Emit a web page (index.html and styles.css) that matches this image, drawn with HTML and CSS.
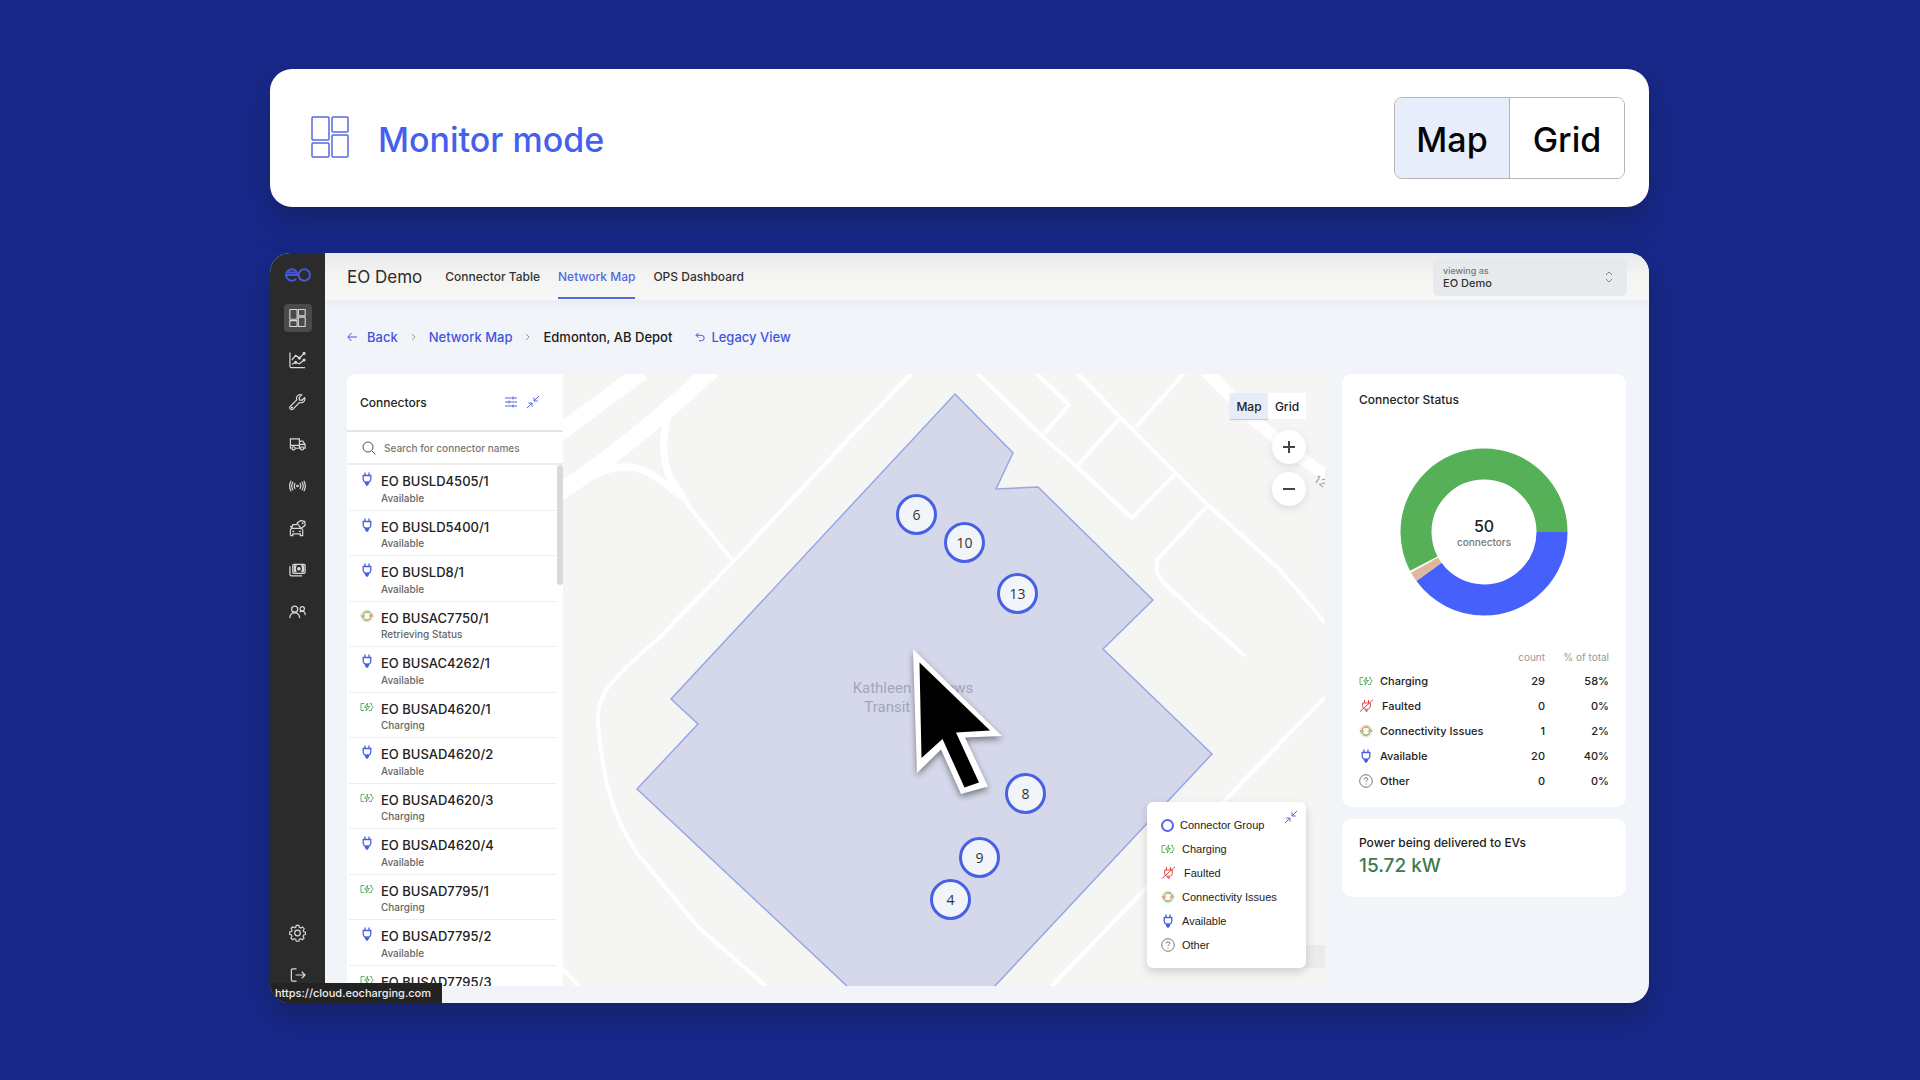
FILE: index.html
```
<!DOCTYPE html>
<html lang="en">
  <head>
    <meta charset="UTF-8" />
    <meta name="viewport" content="width=device-width, initial-scale=1.0" />
    <title>EO Cloud - Network Map</title>
    <link rel="stylesheet" href="styles.css">
  </head>
  <body>
    <!-- icon sprite -->
    <svg class="sprite" aria-hidden="true">
      <symbol id="i-dashboard" viewBox="0 0 38 42">
        <rect x="1" y="1" width="17" height="23" rx="1" /><rect x="21" y="1" width="16" height="15" rx="1" />
        <rect x="1" y="27" width="17" height="14" rx="1" /><rect x="21" y="19" width="16" height="22" rx="1" />
      </symbol>
      <symbol id="i-chart" viewBox="0 0 18 18">
        <path d="M1 1v14.500q0 1.500 1.500 1.500H17M3 9l4-5 4 3 5-5M3 13.500l4-2 4 1.500 5-4" />
        <circle cx="16" cy="2" r="1" /><circle cx="11" cy="7" r="1" /><circle cx="16" cy="9" r="1" /><circle cx="7" cy="11.500" r="1" />
      </symbol>
      <symbol id="i-wrench" viewBox="0 0 18 18">
        <path d="M16.500 4.500 13.500 7.200 11 6.800 10.700 4.400 13.400 1.400C11 .6 8.500 1.800 8 4.200c-.2 1-.1 1.700.2 2.500L1.500 13.400c-.9 1-.8 2.200 0 3 .9.8 2 .8 3-.1l6.600-6.800c2.400.9 5-.4 5.600-2.700.2-.8.1-1.600-.2-2.300z" />
        <circle cx="3.200" cy="14.800" r=".5" />
      </symbol>
      <symbol id="i-truck" viewBox="0 0 18 18">
        <path d="M2.800 13.500H1.500v-10h9.500v10H6.800M11 6h3.500L17 9.500v4h-1.200M12 13.500h-1M1.500 10.500H11M11 9.500h6" />
        <circle cx="4.800" cy="13.600" r="1.700" /><circle cx="13.800" cy="13.600" r="1.700" />
      </symbol>
      <symbol id="i-signal" viewBox="0 0 18 18">
        <circle cx="9" cy="9" r=".8" />
        <path d="M6.500 6q-1.800 3 0 6M11.500 6q1.800 3 0 6M4.400 4.500q-3 4.500 0 9M13.600 4.500q3 4.500 0 9M2.300 3.500q-3.300 5.500 0 11M15.700 3.500q3.300 5.500 0 11" />
      </symbol>
      <symbol id="i-cartag" viewBox="0 0 18 18">
        <path d="M8.500 5.500H4L2.600 9.500H13.500M1.500 17v-6l1.100-1.500M13.500 9.500l1 1.500v6h-2.500V15.200H4V17H1.500M1 7.500h2M3.500 12.500h2M10.500 12.500h2M8.500 3.800 12.500 1l4.200 1.200.3 4L12.800 9.500z" />
        <circle cx="14.500" cy="4" r=".4" />
      </symbol>
      <symbol id="i-cash" viewBox="0 0 18 18">
        <rect x="4" y="3" width="13" height="9.500" rx="1" /><path d="M1 5v8.500q0 1.700 1.700 1.700H14" />
        <path d="M5 4h3.500Q6 7.700 8.500 11.500H5zM16 4h-3.500Q15 7.700 12.500 11.500H16z" fill="currentColor" stroke="none" />
        <circle cx="10.500" cy="7.700" r="1.300" fill="currentColor" />
      </symbol>
      <symbol id="i-users" viewBox="0 0 18 18">
        <circle cx="6" cy="6" r="3.200" /><path d="M.8 15.500q.4-5.500 5.200-5.800 4.800.3 5.400 5.800" />
        <circle cx="14" cy="5.500" r="2.300" /><path d="M11.300 9q1-1 2.700-1 3 .3 3.300 4.300" />
      </symbol>
      <symbol id="i-gear" viewBox="0 0 18 18">
        <path d="M7.500 1h3l.5 2.200 1.500.7 2-1.200 1.900 2-1.200 2 .6 1.400 2.100.4v2.700l-2.200.5-.6 1.500 1.200 2-2 1.900-2-1.200-1.400.6-.4 2.200H7.500L7 16.500l-1.500-.7-2 1.200-1.900-2 1.200-1.900-.6-1.500L.2 11V8.300l2.100-.5.6-1.400-1.200-2 2-1.900 1.900 1.300L7 3.200z" transform="translate(.5 0) scale(.95)" />
        <circle cx="9" cy="9" r="3" />
      </symbol>
      <symbol id="i-logout" viewBox="0 0 18 18">
        <path d="M8 2.500H4Q2.500 2.500 2.500 4v10q0 1.500 1.500 1.500h4M7 9h10M13.500 5.500 17 9l-3.500 3.500" />
      </symbol>
      <symbol id="i-plug" viewBox="0 0 14 14">
        <path d="M5 .5v3M9 .5v3M3.200 3.500h7.600v4q-.3 2-2 2.700H5.200q-1.700-.7-2-2.700z" /><path d="M5.500 10.500h3v1L7 13.300l-1.500-1.800z" fill="currentColor" />
      </symbol>
      <symbol id="i-charging" viewBox="0 0 14 14">
        <path d="M4.500 3.500H1v7h3M10 3.500h1.500v1.500L13.300 7l-1.800 2v1.500H9M7.800 3 4.500 7.300h2.300L6 11l3.600-4.500H7.200z" />
      </symbol>
      <symbol id="i-fault" viewBox="0 0 14 14">
        <path d="M5.500 1v3M9.500 1v3M3.700 4h7.600v3.500q-.3 2-2 2.700H5.700q-1.700-.7-2-2.700zM6.500 10.500 7.500 13l1-2.500M1 12.500 14 .8" />
      </symbol>
      <symbol id="i-issue" viewBox="0 0 14 14">
        <circle cx="7" cy="7" r="6.500" fill="#d5f0d5" stroke="none" />
        <circle cx="7" cy="7" r="4" fill="#f7fbf5" stroke="#7cc57e" />
        <path d="M3.300 5q1.300-2.500 3.700-2.500 2 0 3 1.200M10.700 9q-1.300 2.500-3.700 2.500-2 0-3-1.200M1 6.800h3.600L2.800 9zM9.400 7.200H13L11.200 5z" stroke="#f0906c" />
      </symbol>
      <symbol id="i-other" viewBox="0 0 14 14">
        <circle cx="7" cy="7" r="6.300" /><path d="M5.200 5.500q.1-1.800 1.800-1.800 1.700.1 1.800 1.600 0 .9-1 1.400-.8.400-.8 1.500M7 9.600v1" />
      </symbol>
      <symbol id="i-collapse" viewBox="0 0 14 14">
        <path d="M1 13l5-5M2.300 8H6v3.700M13 1 8 6M8 2.300V6h3.700" />
      </symbol>
    </svg>

    <div class="stage">
      <section class="mode">
        <svg class="mode-icon"><use href="#i-dashboard" /></svg>
        <h1>Monitor mode</h1>
        <div class="switch">
          <button type="button" class="on">Map</button><button type="button">Grid</button>
        </div>
      </section>

      <section class="window">
        <nav class="side">
          <svg class="logo" viewBox="0 0 26 14">
            <path d="M1 7h11.500a5.700 5.700 0 1 0-1.500 3.900M3 4.500h8" /><circle cx="19.300" cy="7" r="5.700" />
          </svg>
          <a href="#" class="active" aria-label="Dashboard"><svg><use href="#i-dashboard" /></svg></a>
          <a href="#" aria-label="Reports"><svg><use href="#i-chart" /></svg></a>
          <a href="#" aria-label="Maintenance"><svg><use href="#i-wrench" /></svg></a>
          <a href="#" aria-label="Fleet"><svg><use href="#i-truck" /></svg></a>
          <a href="#" aria-label="Signals"><svg><use href="#i-signal" /></svg></a>
          <a href="#" aria-label="Vehicle tags"><svg><use href="#i-cartag" /></svg></a>
          <a href="#" aria-label="Billing"><svg><use href="#i-cash" /></svg></a>
          <a href="#" aria-label="Users"><svg><use href="#i-users" /></svg></a>
          <a href="#" class="bottom" aria-label="Settings"><svg><use href="#i-gear" /></svg></a>
          <a href="#" aria-label="Log out"><svg><use href="#i-logout" /></svg></a>
        </nav>

        <div class="main">
          <header class="topbar">
            <h2>EO Demo</h2>
            <a href="#" class="tab">Connector Table</a>
            <a href="#" class="tab current">Network Map</a>
            <a href="#" class="tab">OPS Dashboard</a>
            <div class="viewing">
              <label for="org">viewing as</label>
              <select id="org">
                <option>EO Demo</option>
              </select>
              <svg viewBox="0 0 8 12"><path d="M1 4l3-3 3 3M1 8l3 3 3-3" /></svg>
            </div>
          </header>

          <div class="crumbs">
            <a href="#" class="back"><svg viewBox="0 0 10 10"><path d="M10 5H1M4.500 1 .8 5l3.700 4" /></svg>Back</a>
            <svg class="sep" viewBox="0 0 5 8"><path d="M1 1l3 3-3 3" /></svg>
            <a href="#">Network Map</a>
            <svg class="sep" viewBox="0 0 5 8"><path d="M1 1l3 3-3 3" /></svg>
            <span>Edmonton, AB Depot</span>
            <a href="#" class="legacy"><svg viewBox="0 0 10 10"><path d="M3.500.8 1 3.300l2.500 2.500M1 3.300h5.500a2.700 2.700 0 0 1 0 5.400H4" /></svg>Legacy View</a>
          </div>

          <div class="work">
            <div class="panel">
              <div class="panel-head">
                <h3>Connectors</h3>
                <svg class="filter" viewBox="0 0 12 12"><path d="M0 2h12M0 6h12M0 10h12M8 .5v3M4 4.500v3M8 8.500v3" /></svg>
                <svg class="collapse"><use href="#i-collapse" /></svg>
              </div>
              <div class="search">
                <svg viewBox="0 0 14 14"><circle cx="6" cy="6" r="5" /><path d="M9.800 9.800 13.500 13.500" /></svg>
                <input type="text" placeholder="Search for connector names" aria-label="Search for connector names" />
              </div>
              <ul class="list">
                <li><svg class="ic plug"><use href="#i-plug" /></svg><b>EO BUSLD4505/1</b><span>Available</span></li>
                <li><svg class="ic plug"><use href="#i-plug" /></svg><b>EO BUSLD5400/1</b><span>Available</span></li>
                <li><svg class="ic plug"><use href="#i-plug" /></svg><b>EO BUSLD8/1</b><span>Available</span></li>
                <li><svg class="ic"><use href="#i-issue" /></svg><b>EO BUSAC7750/1</b><span>Retrieving Status</span></li>
                <li><svg class="ic plug"><use href="#i-plug" /></svg><b>EO BUSAC4262/1</b><span>Available</span></li>
                <li><svg class="ic charging"><use href="#i-charging" /></svg><b>EO BUSAD4620/1</b><span>Charging</span></li>
                <li><svg class="ic plug"><use href="#i-plug" /></svg><b>EO BUSAD4620/2</b><span>Available</span></li>
                <li><svg class="ic charging"><use href="#i-charging" /></svg><b>EO BUSAD4620/3</b><span>Charging</span></li>
                <li><svg class="ic plug"><use href="#i-plug" /></svg><b>EO BUSAD4620/4</b><span>Available</span></li>
                <li><svg class="ic charging"><use href="#i-charging" /></svg><b>EO BUSAD7795/1</b><span>Charging</span></li>
                <li><svg class="ic plug"><use href="#i-plug" /></svg><b>EO BUSAD7795/2</b><span>Available</span></li>
                <li><svg class="ic charging"><use href="#i-charging" /></svg><b>EO BUSAD7795/3</b></li>
              </ul>
            </div>

            <div class="map">
              <svg class="tiles" viewBox="0 0 762 612">
                <g class="roads">
                  <path class="wide" d="M-5 60 79-2M-5 119Q60 78 149-4" />
                  <path class="wide mid" d="M642-4 690 45 727 76 766 104" />
                  <path class="ramp" d="M114 20Q92 64 106 102L120 124M30 102Q66 82 97 106L119 123" />
                  <path d="M119 122 132 140 170 187" />
                  <path d="M350-2 292 58 170 188 94 266Q60 294 43 316 33 334 35 350 38 380 43 406 52 446 74 479L135 553 204 613M-3 591 16 613" />
                  <path d="M413-2 480 63 514 93 569 144 614 98M472-2 506 31 481 60" />
                  <path d="M513-2 557 43 645 131 714 193 737 219 763 250M557 44 514 92M622-2 573 53" />
                  <path d="M645 131 594 186V199L600 208 630 236 682 282M763 322 665 423 584 513 488 613" />
                </g>
                <path class="depot" d="M392 20 450 79 433 115 475 113 590 226 540 275 649 380 430 614 286 614 74 415 135 350 108 325z" />
                <text class="road-no" x="750" y="107" transform="rotate(33 750 107)">12</text>
              </svg>
              <p class="place">Kathleen Andrews<br>Transit Garage</p>

              <div class="pin p6">6</div>
              <div class="pin p10">10</div>
              <div class="pin p13">13</div>
              <div class="pin p8">8</div>
              <div class="pin p9">9</div>
              <div class="pin p4">4</div>

              <div class="controls">
                <div class="mini">
                  <button type="button" class="on">Map</button><button type="button">Grid</button>
                </div>
                <button type="button" class="zoom" aria-label="Zoom in"><svg viewBox="0 0 14 14"><path d="M7 1v12M1 7h12" /></svg></button>
                <button type="button" class="zoom" aria-label="Zoom out"><svg viewBox="0 0 14 14"><path d="M1 7h12" /></svg></button>
              </div>

              <div class="attribution"></div>
              <div class="legend">
                <svg class="collapse"><use href="#i-collapse" /></svg>
                <ul>
                  <li><i class="ring"></i>Connector Group</li>
                  <li><svg class="ic charging"><use href="#i-charging" /></svg>Charging</li>
                  <li><svg class="ic fault"><use href="#i-fault" /></svg>Faulted</li>
                  <li><svg class="ic"><use href="#i-issue" /></svg>Connectivity Issues</li>
                  <li><svg class="ic plug"><use href="#i-plug" /></svg>Available</li>
                  <li><svg class="ic other"><use href="#i-other" /></svg>Other</li>
                </ul>
              </div>

              <svg class="cursor" viewBox="0 0 104 160">
                <path d="M5 5 94 92 57 93.500 80 142.500 53 150 33 105.500 9 129z" fill="#fff" />
                <path d="M11.500 18.500 82 86.500 48 88.500 71 138.500 56.500 143.500 34.500 95 13.500 114z" />
              </svg>
            </div>

            <aside>
              <div class="card">
                <h3>Connector Status</h3>
                <div class="donut">
                  <svg viewBox="0 0 168 168">
                    <!-- 40% available, 2% connectivity issues, 58% charging -->
                    <circle class="d-free" cx="84" cy="84" r="68" pathLength="100" stroke-dasharray="40 60" />
                    <circle class="d-issue" cx="84" cy="84" r="68" pathLength="100" stroke-dasharray="1.900 98.100" stroke-dashoffset="-40" />
                    <circle class="d-charge" cx="84" cy="84" r="68" pathLength="100" stroke-dasharray="57.700 42.300" stroke-dashoffset="-42.300" />
                  </svg>
                  <div class="donut-text"><strong>50</strong>connectors</div>
                </div>
                <table>
                  <thead>
                    <tr><th></th><th>count</th><th>% of total</th></tr>
                  </thead>
                  <tbody>
                    <tr><td><svg class="ic charging"><use href="#i-charging" /></svg>Charging</td><td>29</td><td>58%</td></tr>
                    <tr><td><svg class="ic fault"><use href="#i-fault" /></svg>Faulted</td><td>0</td><td>0%</td></tr>
                    <tr><td><svg class="ic"><use href="#i-issue" /></svg>Connectivity Issues</td><td>1</td><td>2%</td></tr>
                    <tr><td><svg class="ic plug"><use href="#i-plug" /></svg>Available</td><td>20</td><td>40%</td></tr>
                    <tr><td><svg class="ic other"><use href="#i-other" /></svg>Other</td><td>0</td><td>0%</td></tr>
                  </tbody>
                </table>
              </div>
              <div class="card power">
                <h3>Power being delivered to EVs</h3>
                <strong>15.72 kW</strong>
              </div>
            </aside>
          </div>
        </div>

        <div class="status-url">https://cloud.eocharging.com</div>
      </section>
    </div>
  </body>
</html>
```
FILE: styles.css
```
* {
  box-sizing: border-box;
}
body {
  margin: 0;
  background: #17288a;
  color: #222;
  font-family: Inter, "Liberation Sans", sans-serif;
  font-weight: 500;
}
h1,
h2,
h3,
p,
ul {
  margin: 0;
  padding: 0;
  font-weight: 500;
}
ul {
  list-style: none;
}
a {
  color: #4356e0;
  text-decoration: none;
}
button {
  border: 0;
  padding: 0;
  font: inherit;
  color: #222;
  background: #fff;
}
svg {
  fill: none;
  stroke: currentColor;
  flex: none;
}
.sprite {
  position: absolute;
  width: 0;
  height: 0;
}
.stage {
  display: flex;
  flex-direction: column;
  gap: 46px;
  padding: 69px 271px 77px 270px;
}

/* mode bar */
.mode {
  display: flex;
  align-items: center;
  height: 138px;
  padding: 0 24px 0 41px;
  border-radius: 22px;
  background: #fff;
  box-shadow: 0 14px 28px rgba(22, 28, 70, 0.5);
}
.mode-icon {
  width: 38px;
  height: 42px;
  margin-bottom: 2px;
  stroke-width: 1.5;
  color: #5569dc;
}
.mode h1 {
  margin-left: 29px;
  padding-top: 2px;
  font-size: 34px;
  color: #4560ee;
}
.switch {
  display: flex;
  width: 231px;
  height: 82px;
  margin-left: auto;
  border: 1px solid #b4b4b4;
  border-radius: 8px;
  overflow: hidden;
}
.switch button {
  flex: 1;
  padding-top: 2px;
  font-size: 34px;
  color: #050505;
}
.switch .on {
  background: #e8edfb;
  border-right: 1px solid #b4b4b4;
}

/* app window */
.window {
  position: relative;
  display: flex;
  border-radius: 20px;
  overflow: hidden;
  background: #f1f5f9;
  box-shadow: 0 14px 28px rgba(22, 28, 70, 0.5);
}
.side {
  position: relative;
  z-index: 1;
  display: flex;
  flex-direction: column;
  align-items: center;
  gap: 14px;
  width: 55px;
  padding: 15px 0 14px;
  background: #2b2b2b;
}
.side .logo {
  width: 26px;
  height: 14px;
  margin-bottom: 8px;
  color: #4458d8;
  stroke-width: 2;
}
.side a {
  display: flex;
  align-items: center;
  justify-content: center;
  width: 28px;
  height: 28px;
  border-radius: 4px;
  color: #d8d8d8;
  stroke-width: 1.3;
}
.side a svg {
  width: 17px;
  height: 18px;
}
.side .active {
  background: #4b4b4b;
  stroke-width: 2.600;
}
.side .bottom {
  margin-top: auto;
}
.main {
  flex: 1;
  min-width: 0;
}
.topbar {
  display: flex;
  align-items: center;
  gap: 18px;
  height: 47px;
  padding: 0 22px;
  background: linear-gradient(#eaeaea, #f4f4f3 50%, #f8f8f7);
  box-shadow: 0 3px 8px #e6eaee;
}
.topbar h2 {
  margin-right: 5px;
  font-size: 17px;
  font-weight: 400;
  color: #2b2b2b;
}
.tab {
  height: 45px;
  line-height: 45px;
  font-size: 12px;
  color: #333;
}
.current {
  color: #5468e0;
  border-bottom: 2px solid #5468e0;
}
.viewing {
  position: relative;
  width: 194px;
  height: 38px;
  margin-left: auto;
  padding: 7px 10px;
  border-radius: 6px;
  background: #e7eaec;
}
.viewing label,
.viewing select {
  display: block;
  font-size: 9px;
  line-height: 11px;
  color: #777;
}
.viewing select {
  width: 100%;
  padding: 0;
  border: 0;
  appearance: none;
  background: none;
  font-family: inherit;
  font-weight: 500;
  font-size: 11px;
  line-height: 15px;
  color: #333;
}
.viewing svg {
  position: absolute;
  right: 14px;
  top: 13px;
  width: 8px;
  height: 12px;
  color: #888;
}
.crumbs {
  display: flex;
  align-items: center;
  height: 74px;
  padding: 0 22px;
  font-size: 13px;
  color: #1c1c1c;
}
.crumbs a svg {
  width: 10px;
  height: 10px;
}
.back svg {
  margin-right: 10px;
}
.crumbs .sep {
  width: 5px;
  height: 8px;
  margin: 0 13px;
  color: #999;
}
.legacy {
  margin-left: 23px;
}
.legacy svg {
  margin-right: 6px;
}
.work {
  display: grid;
  grid-template-columns: 216px 1fr 301px;
  height: 612px;
  margin: 0 23px 17px 22px;
}

/* connectors panel */
.panel {
  display: flex;
  flex-direction: column;
  min-height: 0;
  border-radius: 8px 0 0 0;
  background: #fff;
}
.panel-head {
  display: flex;
  align-items: center;
  height: 58px;
  padding: 0 23px 0 13px;
  border-bottom: 2px solid #e6e6e6;
}
h3 {
  font-size: 12px;
}
.panel-head h3 {
  flex: 1;
}
.filter {
  width: 12px;
  height: 12px;
  color: #5468e0;
}
.collapse {
  width: 14px;
  height: 14px;
  color: #5468e0;
}
.panel-head .collapse {
  margin-left: 9px;
}
.search {
  display: flex;
  align-items: center;
  height: 33px;
  padding: 0 15px;
  border-bottom: 2px solid #eee;
}
.search svg {
  width: 14px;
  height: 14px;
  color: #555;
}
.search input {
  flex: 1;
  min-width: 0;
  margin-left: 8px;
  padding: 0;
  border: 0;
  outline: 0;
  font: inherit;
  font-size: 10px;
}
.search input::placeholder {
  color: #777;
}
.list {
  position: relative;
  flex: 1;
  min-height: 0;
  overflow: hidden;
}
/* scroll thumb */
.list::after {
  content: "";
  position: absolute;
  top: 0;
  right: 0;
  width: 6px;
  height: 120px;
  border-radius: 3px;
  background: #d9d9d9;
}
.list li {
  display: grid;
  grid-template-columns: 21px 1fr;
  margin: 0 7px 0 2px;
  padding: 7px 0 5px 11px;
  border-bottom: 1px solid #eee;
}
.list b {
  font-size: 13px;
  font-weight: 500;
  line-height: 1.5;
}
.list span {
  grid-column: 2;
  font-size: 10px;
  line-height: 13px;
  color: #666;
}
.ic {
  width: 14px;
  height: 14px;
}
.plug {
  color: #4a5ee6;
  stroke-width: 1.3;
}
.charging {
  color: #62b266;
}
.fault {
  margin-right: 2px;
  color: #dc4444;
}
.other {
  color: #777;
}

/* map */
.map {
  position: relative;
  overflow: hidden;
  background: #f5f6f4;
}
.tiles {
  position: absolute;
  top: 0;
  left: 0;
  width: 762px;
  height: 612px;
}
.roads {
  stroke: #fff;
  stroke-width: 4;
  stroke-linejoin: round;
}
.roads .wide {
  stroke-width: 17;
}
.roads .mid {
  stroke-width: 12;
}
.roads .ramp {
  stroke-width: 7;
}
.depot {
  fill: #d5d8ea;
  stroke: #98a6e6;
  stroke-width: 1.5;
}
.road-no {
  fill: #999;
  stroke: none;
  font: 11px Roboto, sans-serif;
}
.place {
  position: absolute;
  left: 280px;
  top: 305px;
  width: 140px;
  font: 15px/19px Roboto, sans-serif;
  text-align: center;
  color: #a3a6b8;
}
.pin {
  position: absolute;
  width: 41px;
  height: 41px;
  margin: -21px 0 0 -21px;
  border: 3px solid #4660e6;
  border-radius: 50%;
  background: #f1f5fa;
  font: 14px/35px "Open Sans", sans-serif;
  text-align: center;
  color: #333;
}
.p6 {
  left: 354px;
  top: 141px;
}
.p10 {
  left: 402px;
  top: 169px;
}
.p13 {
  left: 455px;
  top: 220px;
}
.p8 {
  left: 463px;
  top: 420px;
}
.p9 {
  left: 417px;
  top: 484px;
}
.p4 {
  left: 388px;
  top: 526px;
}
.controls {
  position: absolute;
  top: 19px;
  right: 19px;
  display: flex;
  flex-direction: column;
  align-items: flex-end;
}
.mini {
  display: flex;
  margin-bottom: 11px;
}
.mini button {
  width: 38px;
  height: 26px;
  font-size: 12px;
}
.mini .on {
  background: #e8ecf8;
  box-shadow: 0 1px 1px #c3cbe8;
}
.zoom {
  display: flex;
  align-items: center;
  justify-content: center;
  width: 34px;
  height: 34px;
  margin-bottom: 8px;
  border-radius: 50%;
  box-shadow: 0 3px 8px rgba(0, 0, 0, 0.1);
}
.zoom svg {
  width: 14px;
  height: 14px;
  stroke-width: 2;
  color: #444;
}
.attribution {
  position: absolute;
  right: 0;
  bottom: 18px;
  width: 24px;
  height: 23px;
  background: #ebebea;
}
.legend {
  position: absolute;
  right: 19px;
  bottom: 18px;
  width: 159px;
  padding: 11px 14px;
  border-radius: 6px;
  background: #fff;
  box-shadow: 0 4px 10px rgba(0, 0, 0, 0.16);
  font: 11px "Liberation Sans", sans-serif;
}
.legend .collapse {
  position: absolute;
  right: 8px;
  top: 8px;
}
.legend li {
  display: flex;
  align-items: center;
  gap: 7px;
  height: 24px;
}
.ring {
  width: 13px;
  height: 13px;
  margin-right: -1px;
  border: 2px solid #5468e0;
  border-radius: 50%;
}
.cursor {
  position: absolute;
  left: 345px;
  top: 270px;
  width: 104px;
  height: 160px;
  stroke: none;
  fill: #000;
  filter: drop-shadow(0 3px 3px rgba(0, 0, 0, 0.45));
}

/* right column */
aside {
  display: flex;
  flex-direction: column;
  gap: 12px;
  margin-left: 17px;
}
.card {
  padding: 16px 17px 14px;
  border-radius: 10px;
  background: #fff;
}
.card h3 {
  line-height: 20px;
}
.donut {
  position: relative;
  width: 168px;
  height: 168px;
  margin: 38px auto 29px;
}
.donut circle {
  stroke-width: 31;
}
.d-free {
  stroke: #4660fb;
}
.d-issue {
  stroke: #dfb79f;
}
.d-charge {
  stroke: #55b058;
}
.donut-text {
  position: absolute;
  inset: 0;
  display: flex;
  flex-direction: column;
  align-items: center;
  justify-content: center;
  font-size: 10px;
  line-height: 12px;
  color: #777;
}
.donut-text strong {
  font-size: 16px;
  font-weight: 500;
  line-height: 20px;
  color: #222;
}
table {
  width: 100%;
  border-collapse: collapse;
  font-size: 11px;
}
th,
td {
  height: 25px;
  padding: 0;
  text-align: right;
}
th {
  height: 23px;
  font-size: 10px;
  font-weight: 400;
  color: #999;
}
td:first-child {
  display: flex;
  align-items: center;
  gap: 7px;
}
th:last-child,
td:last-child {
  width: 64px;
}
.power {
  padding: 14px 17px 18px;
}
.power strong {
  display: block;
  font-size: 19px;
  font-weight: 500;
  line-height: 26px;
  color: #3f7a49;
}

/* link preview in the corner */
.status-url {
  position: absolute;
  z-index: 2;
  left: 0;
  bottom: 0;
  width: 172px;
  height: 20px;
  padding-left: 5px;
  background: #232323;
  font-size: 11px;
  line-height: 20px;
  color: #eee;
}
```
